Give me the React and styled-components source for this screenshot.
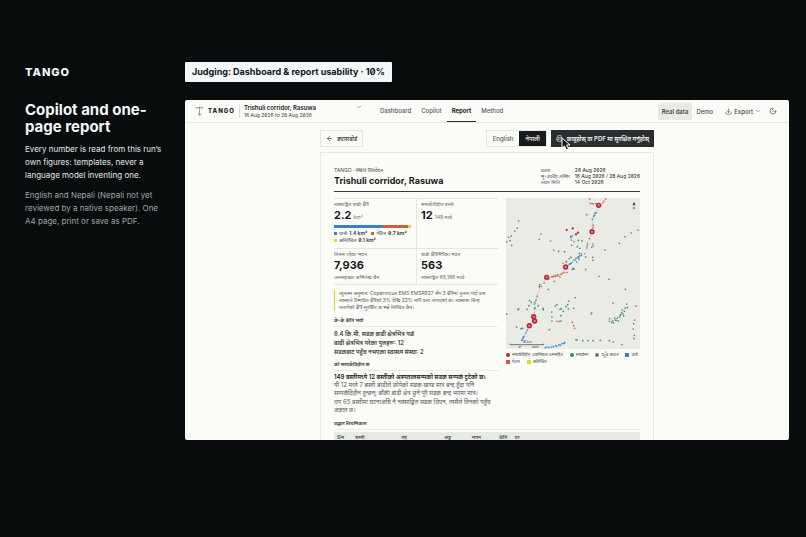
import styled, { createGlobalStyle } from 'styled-components';
import { ArrowLeft, ChevronDown, Download, Moon, Printer } from 'lucide-react';

const GlobalStyle = createGlobalStyle`
  *, *::before, *::after {
    box-sizing: border-box;
  }

  body {
    margin: 0;
    background: #080c0d;
    font-family: Inter, 'Noto Sans', 'Noto Sans Devanagari', sans-serif;
    font-feature-settings: 'zero' 1;
    color: #1c2022;
  }

  h1, h2, h3, p, ul, dl, dd {
    margin: 0;
    padding: 0;
  }

  ul {
    list-style: none;
  }

  button {
    font: inherit;
    font-feature-settings: inherit;
    color: inherit;
    background: none;
    border: 0;
    padding: 0;
    cursor: pointer;
  }
`;

const Slide = styled.div`
  display: grid;
  grid-template-columns: 142px minmax(0, 1fr);
  column-gap: 18px;
  min-height: 100vh;
  padding: 62px 17px 0 25px;
`;

const Aside = styled.aside`
  display: flex;
  flex-direction: column;
  color: #f4f7f7;
`;

const SlideBrand = styled.div`
  font-size: 11px;
  font-weight: 800;
  line-height: 21px;
  letter-spacing: 1px;
`;

const SlideTitle = styled.h1`
  margin: 18px 0 1px;
  font-size: 15px;
  font-weight: 700;
  line-height: 17px;
`;

const SlideText = styled.p`
  margin-top: 7px;
  font-size: 8px;
  line-height: 13px;
  color: ${({ $muted }) => ($muted ? '#a0a5a6' : '#e4e8e8')};
`;

const Stage = styled.main`
  display: flex;
  flex-direction: column;
  align-items: flex-start;
  gap: 18px;
`;

const Criterion = styled.div`
  padding: 0 7px;
  border-radius: 1px;
  background: #f4f8fa;
  font-size: 9px;
  font-weight: 700;
  line-height: 20px;
  color: #111516;
`;

const Screen = styled.section`
  width: 100%;
  aspect-ratio: 16 / 9;
  overflow: hidden;
  border-radius: 2px;
  background: #fbfcf7;
`;

const TopBar = styled.header`
  display: flex;
  align-items: center;
  height: 23px;
  padding: 0 10px;
  border-bottom: 1px solid #e8e9e4;
  font-size: 6px;
  color: #43484a;
`;

const Brand = styled.div`
  display: flex;
  align-items: center;
  gap: 4px;
  padding-right: 4px;
  border-right: 1px solid #dcded9;
  font-size: 6px;
  font-weight: 800;
  line-height: 14px;
  letter-spacing: 1px;
  color: #1c2022;
`;

const AreaPicker = styled.button`
  display: flex;
  align-items: flex-start;
  justify-content: space-between;
  width: 118px;
  margin-left: 4px;
  text-align: left;
  line-height: 7px;

  strong {
    display: block;
    font-weight: 600;
    color: #1c2022;
  }

  small {
    font-size: 5px;
  }
`;

const Nav = styled.nav`
  display: flex;
  align-self: stretch;
  margin-left: 13px;
`;

const NavLink = styled.a`
  display: flex;
  align-items: center;
  padding: 0 5px;
  border-bottom: 1px solid ${({ $active }) => ($active ? '#2b3032' : 'transparent')};
  font-weight: ${({ $active }) => ($active ? 700 : 500)};
  color: ${({ $active }) => ($active ? '#1c2022' : '#565b5d')};
  text-decoration: none;
`;

const Tools = styled.div`
  display: flex;
  align-items: center;
  margin-left: auto;
  padding-right: 2px;
`;

const ModeButton = styled.button`
  padding: 0 4px;
  line-height: 17px;
  font-weight: ${({ $active }) => ($active ? 600 : 500)};
  background: ${({ $active }) => ($active ? '#e9eae4' : 'transparent')};
`;

const ToolButton = styled.button`
  display: flex;
  align-items: center;
  gap: 2px;
  margin-left: 8px;
  font-weight: 500;
`;

const Content = styled.div`
  width: 90%;
  max-width: 334px;
  margin: 0 auto;
  padding-top: 7px;
`;

const ActionRow = styled.div`
  display: flex;
  align-items: center;
  margin-bottom: 5px;
  font-size: 6px;
  line-height: 15px;
`;

const BackButton = styled.button`
  display: flex;
  align-items: center;
  gap: 4px;
  margin-right: auto;
  padding: 0 5px;
  border: 1px solid #e4e6e0;
`;

const LanguageSwitch = styled.div`
  display: flex;
  border: 1px solid #e4e6e0;
`;

const LanguageButton = styled.button`
  padding: 0 6px;
  font-weight: 500;
  background: ${({ $active }) => ($active ? '#171b1d' : 'transparent')};
  color: ${({ $active }) => ($active ? '#f6f7f3' : '#565b5d')};
`;

const PrintButton = styled.button`
  position: relative;
  display: flex;
  align-items: center;
  gap: 4px;
  margin-left: 4px;
  padding: 1px 5px;
  background: #2a2e31;
  color: #f4f5f1;
  font-weight: 600;
`;

const Pointer = styled.svg`
  position: absolute;
  top: 7px;
  left: 10px;
  width: 10px;
  height: 14px;
`;

const Paper = styled.article`
  padding: 14px 13px;
  border: 1px solid #e7e9e3;
`;

const PaperHeader = styled.header`
  display: flex;
  justify-content: space-between;
  padding-bottom: 3px;
  border-bottom: 1px solid #33383a;
`;

const Eyebrow = styled.p`
  font-size: 5px;
  line-height: 7px;
  color: #43484a;
`;

const PaperTitle = styled.h2`
  font-size: 9px;
  font-weight: 700;
  line-height: 14px;
`;

const Facts = styled.dl`
  display: grid;
  grid-template-columns: 34px auto;
  grid-auto-rows: 6px;
  font-size: 5px;
  line-height: 6px;
  white-space: nowrap;

  dt {
    color: #565b5d;
  }
`;

const Columns = styled.div`
  display: grid;
  grid-template-columns: minmax(0, 164fr) minmax(0, 134fr);
  gap: 8px;
  align-items: start;
  padding-top: 6px;
`;

const Stats = styled.div`
  display: grid;
  grid-template-columns: 1fr 1fr;
  grid-template-rows: 50px 36px;
  border-bottom: 1px solid #e4e6e0;
`;

const Stat = styled.div`
  padding: 2px 0 0;
  border-top: 1px solid #e4e6e0;
  font-size: 5px;
  line-height: 7px;
  color: #64696a;

  &:nth-child(even) {
    padding-left: 4px;
    border-left: 1px solid #e4e6e0;
  }
`;

const Figure = styled.div`
  font-size: 5px;
  line-height: 14px;

  strong {
    margin-right: 2px;
    font-size: 11px;
    font-weight: 700;
    color: #15191a;
  }
`;

const SplitBar = styled.div`
  display: flex;
  height: 3px;
  margin: 1px 5px 2px 0;

  span:nth-child(1) {
    flex: 14;
    background: #3283cf;
  }

  span:nth-child(2) {
    flex: 7;
    background: #d95b3d;
  }

  span:nth-child(3) {
    flex: 1;
    background: #e8d325;
  }
`;

const Legend = styled.ul`
  display: flex;
  flex-wrap: wrap;
  column-gap: ${({ $map }) => ($map ? 7 : 4)}px;
  font-size: ${({ $map }) => ($map ? 4 : 5)}px;
  line-height: 7px;
  color: #43484a;
`;

const LegendItem = styled.li`
  display: flex;
  align-items: center;
  gap: 2px;
  white-space: nowrap;

  &::before {
    content: '';
    width: ${({ $size }) => $size || 4}px;
    height: ${({ $size }) => $size || 4}px;
    border-radius: ${({ $round }) => ($round ? '50%' : 0)};
    background: ${({ $color }) => $color};
  }
`;

const Callout = styled.p`
  margin: 5px 0;
  padding: 0 6px 0 4px;
  border-left: 1px solid #e8d325;
  font-size: 5px;
  line-height: 7px;
  color: #565b5d;
`;

const SectionTitle = styled.h3`
  margin-bottom: 2px;
  padding-bottom: 2px;
  border-bottom: 1px solid #e8eae4;
  font-size: 5px;
  font-weight: 600;
  line-height: 8px;
  color: #33383a;
`;

const DamageList = styled.ul`
  margin-bottom: 4px;
  font-size: 6px;
  font-weight: 500;
  line-height: 9px;
`;

const Body = styled.p`
  font-size: 6px;
  line-height: 8px;
  font-weight: ${({ $strong }) => ($strong ? 600 : 400)};
  color: ${({ $strong }) => ($strong ? '#1c2022' : '#565b5d')};

  &:last-of-type {
    margin: 1px 0 5px;
  }
`;

const MapSvg = styled.svg`
  display: block;
  width: 100%;
  margin-bottom: 2px;
  background: #e9ebe4;
`;

const PriorityTable = styled.table`
  width: 100%;
  border-collapse: collapse;
  font-size: 5px;
  line-height: 8px;
  color: #43484a;

  th {
    padding: 1px 3px;
    background: #e7e9e2;
    font-weight: 500;
    text-align: left;
  }
`;

const DOTS = {
  '#6f7676': [
    [38, 69], [34, 90], [26, 99], [8, 118], [16, 114], [12, 128], [2, 132], [17, 142], [100, 124], [105, 108],
    [242, 50], [259, 64], [340, 136], [357, 116], [376, 105], [396, 96], [297, 156], [197, 142], [239, 214],
    [279, 235], [309, 244], [358, 274], [260, 138], [262, 144], [257, 148], [196, 126], [220, 166], [208, 299],
    [130, 395], [386, 366], [383, 377], [382, 393], [385, 412], [384, 422], [2, 348], [176, 161], [145, 250],
    [362, 318], [349, 336], [311, 362], [310, 370], [320, 368], [343, 352], [328, 366], [390, 324], [348, 440],
  ],
  '#2f8f55': [
    [143, 156], [158, 160], [217, 127], [228, 129], [214, 146], [222, 151], [239, 177], [260, 178], [261, 187],
    [212, 192], [219, 184], [195, 178], [181, 190], [199, 214], [204, 213], [202, 211], [36, 335], [38, 333],
    [71, 308], [76, 313], [97, 323], [111, 331], [112, 335], [63, 334], [86, 331], [69, 323], [137, 342],
    [138, 357], [138, 369], [153, 320], [162, 334], [166, 332], [172, 340], [180, 326], [188, 309], [187, 333],
    [203, 331], [32, 387], [45, 392], [50, 391], [165, 369], [165, 353], [185, 320], [148, 324], [317, 373],
    [322, 375], [331, 367], [337, 369], [341, 357], [344, 350], [347, 344], [351, 348], [355, 340], [358, 330],
    [326, 360], [353, 354], [334, 360], [210, 425], [213, 426], [230, 428], [246, 428], [261, 428], [283, 427],
    [310, 428], [322, 432], [321, 315], [364, 329], [100, 266], [101, 260], [127, 274],
  ],
  '#d4603f': [
    [251, 3], [253, 16], [258, 17], [262, 18], [270, 17], [290, 15], [294, 10], [299, 3], [181, 192], [171, 196],
    [162, 237], [155, 230], [150, 234], [143, 235], [138, 236], [129, 243], [115, 255], [106, 265], [94, 295],
    [153, 370], [160, 370], [199, 373], [203, 383], [206, 391], [134, 129], [256, 348], [257, 344], [204, 131],
    [250, 122], [262, 82], [261, 89], [190, 182], [204, 186], [183, 223], [148, 232], [167, 228], [174, 224],
  ],
  '#3283cf': [
    [267, 46], [265, 52], [263, 55], [270, 44], [194, 115], [198, 114], [195, 118], [215, 178], [222, 173],
    [226, 168], [190, 199], [193, 197], [196, 196], [210, 181], [218, 176], [118, 449], [123, 447], [129, 448],
    [136, 447], [142, 446], [149, 443], [153, 445], [159, 440], [163, 442], [168, 437], [173, 436], [176, 434],
    [50, 422], [54, 415], [60, 405], [52, 418], [64, 396], [47, 427], [84, 318], [87, 312], [90, 306], [87, 330],
  ],
  '#b9253a': [[182, 96], [200, 91], [210, 109], [216, 104]],
};

const PINS = [[278, 22], [258, 101], [179, 207], [122, 238], [83, 356], [86, 369], [70, 383]];

const NAV_ITEMS = ['Dashboard', 'Copilot', 'Report', 'Method'];

const TABLE_HEADS = ['क्रम', 'बस्ती', 'तह', 'अङ्क', 'भवन', 'क्षति', 'घर'];
const TABLE_WIDTHS = ['6%', '15%', '14%', '9%', '9%', '5%', '42%'];

function LogoMark() {
  return (
    <svg width="9" height="10" viewBox="0 0 27 30" fill="none">
      <path d="M2 5h23M13.5 2v20" stroke="#6d7375" strokeWidth="2" />
      <path d="M5 5v5M22 5v5" stroke="#a7acad" strokeWidth="2" />
      <circle cx="13.5" cy="25" r="4.5" fill="#e5a6a6" />
      <circle cx="13.5" cy="25" r="2" fill="#c5545c" />
    </svg>
  );
}

function AreaMap() {
  return (
    <MapSvg viewBox="0 0 402 453" role="img">
      <path
        d="M280 27L272 44L262 60L259 80L258 101L251 122M238 166L215 180L190 200L178 212L163 230L145 236L122 239L105 262L94 290L87 325L84 356L70 383L60 402L48 426"
        fill="none"
        stroke="#8c9598"
        strokeWidth="2"
        strokeDasharray="4 5"
      />
      <path d="M172 224L158 234L135 237" fill="none" stroke="#d4603f" strokeWidth="3" strokeDasharray="5 3" />
      <path d="M237 166L188 200" fill="none" stroke="#3283cf" strokeWidth="3" strokeDasharray="3 8" />
      <path d="M245 134L242 154" stroke="#8b7d83" strokeWidth="4" strokeDasharray="2 1" />
      {Object.entries(DOTS).map(([color, points]) => (
        <g key={color} fill={color} fillOpacity="0.9">
          {points.map(([x, y]) => (
            <circle key={`${x}-${y}`} cx={x} cy={y} r={color === '#b9253a' ? 3.5 : 2.6} />
          ))}
        </g>
      ))}
      {PINS.map(([x, y]) => (
        <g key={`${x}-${y}`}>
          <circle cx={x} cy={y} r="8" fill="#b9253a" />
          <circle cx={x} cy={y} r="3" fill="#efc9cd" />
          <circle cx={x} cy={y} r="1.5" fill="#b9253a" />
        </g>
      ))}
      <path d="M384 11L389 23L384 20L379 23Z" fill="#33383a" />
      <circle cx="384" cy="30" r="2.5" fill="none" stroke="#565b5d" strokeWidth="2" />
      <path d="M12 437v3h101v-3" fill="none" stroke="#33383a" strokeWidth="2" />
      <text x="63" y="435" fontSize="10" textAnchor="middle" fill="#33383a">10 km</text>
      <text x="38" y="451" fontSize="8" fill="#33383a">0°</text>
      <text x="78" y="451" fontSize="8" fill="#33383a">10km</text>
    </MapSvg>
  );
}

function AppBar() {
  return (
    <TopBar>
      <Brand>
        <LogoMark />
        TANGO
      </Brand>
      <AreaPicker type="button">
        <span>
          <strong>Trishuli corridor, Rasuwa</strong>
          <small>16 Aug 2026 to 28 Aug 2026</small>
        </span>
        <ChevronDown size={6} />
      </AreaPicker>
      <Nav>
        {NAV_ITEMS.map((item) => (
          <NavLink key={item} href={`#${item.toLowerCase()}`} $active={item === 'Report'}>
            {item}
          </NavLink>
        ))}
      </Nav>
      <Tools>
        <ModeButton type="button" $active>Real data</ModeButton>
        <ModeButton type="button">Demo</ModeButton>
        <ToolButton type="button">
          <Download size={7} />
          Export
          <ChevronDown size={6} />
        </ToolButton>
        <ToolButton type="button" aria-label="Dark mode">
          <Moon size={8} />
        </ToolButton>
      </Tools>
    </TopBar>
  );
}

function Report() {
  return (
    <Paper>
      <PaperHeader>
        <div>
          <Eyebrow>TANGO · स्थिति प्रतिवेदन</Eyebrow>
          <PaperTitle>Trishuli corridor, Rasuwa</PaperTitle>
        </div>
        <Facts>
          <dt>घटना</dt>
          <dd>26 Aug 2026</dd>
          <dt>भू-उपग्रह तस्बिर</dt>
          <dd>16 Aug 2026 / 28 Aug 2026</dd>
          <dt>तयार मिति</dt>
          <dd>14 Oct 2026</dd>
        </Facts>
      </PaperHeader>

      <Columns>
        <div>
          <Stats>
            <Stat>
              नक्साङ्कित बाढी क्षेत्र
              <Figure><strong>2.2</strong>km²</Figure>
              <SplitBar><span /><span /><span /></SplitBar>
              <Legend>
                <LegendItem $color="#3283cf" $size={3}>पानी <b>1.4 km²</b></LegendItem>
                <LegendItem $color="#d95b3d" $size={3}>गेग्रान <b>0.7 km²</b></LegendItem>
                <LegendItem $color="#e8d325" $size={3}>अनिश्चित <b>0.1 km²</b></LegendItem>
              </Legend>
            </Stat>
            <Stat>
              सम्पर्कविहीन बस्ती
              <Figure><strong>12</strong>149 मध्ये</Figure>
            </Stat>
            <Stat>
              तिनमा रहेका भवन
              <Figure><strong>7,936</strong></Figure>
              जनसङ्ख्या अभिलेख छैन
            </Stat>
            <Stat>
              बाढी क्षेत्रभित्रका भवन
              <Figure><strong>563</strong></Figure>
              नक्साङ्कित 65,166 मध्ये
            </Stat>
          </Stats>
          <Callout>
            न्यूनतम अनुमान: Copernicus EMS EMSR927 सँग 3 क्षेत्रमा तुलना गर्दा यस नक्साले प्रभावित क्षेत्रको 3% देखि
            22% मात्र पत्ता लगाएको छ। नक्सामा चिन्ह नलागेको क्षेत्र सुरक्षित छ भन्ने निश्चित छैन।
          </Callout>
          <SectionTitle>के-के क्षति भयो</SectionTitle>
          <DamageList>
            <li>8.4 कि.मी. सडक बाढी क्षेत्रभित्र पर्छ</li>
            <li>बाढी क्षेत्रभित्र परेका पुलहरू: 12</li>
            <li>सडकबाट पहुँच नभएका स्वास्थ्य संस्था: 2</li>
          </DamageList>
          <SectionTitle>को सम्पर्कविहीन छ</SectionTitle>
          <Body $strong>149 बस्तीमध्ये 12 बस्तीको अस्पतालसम्मको सडक सम्पर्क टुटेको छ।</Body>
          <Body>
            यी 12 मध्ये 7 बस्ती बाढीले छोपेको सडक खण्ड मात्र बन्द हुँदा पनि सम्पर्कविहीन हुन्छन्; बाँकी बाढी क्षेत्र
            छुने पूरै सडक बन्द भएमा मात्र।
          </Body>
          <Body>थप 65 बस्तीमा घटनाअघि नै नक्साङ्कित सडक थिएन, त्यसैले तिनको पहुँच अज्ञात छ।</Body>
        </div>
        <div>
          <AreaMap />
          <Legend $map>
            <LegendItem $round $color="#b9253a">सम्पर्कविहीन, प्राथमिकता क्रमसहित</LegendItem>
            <LegendItem $round $color="#2f8f55">सम्पर्कमा</LegendItem>
            <LegendItem $round $color="#6f7676">पहुँच अज्ञात</LegendItem>
            <LegendItem $color="#3283cf">पानी</LegendItem>
            <LegendItem $color="#d95b3d">गेग्रान</LegendItem>
            <LegendItem $color="#e8d325">अनिश्चित</LegendItem>
          </Legend>
        </div>
      </Columns>

      <SectionTitle>उद्धार प्राथमिकता</SectionTitle>
      <PriorityTable>
        <thead>
          <tr>
            {TABLE_HEADS.map((head, i) => (
              <th key={head} width={TABLE_WIDTHS[i]}>{head}</th>
            ))}
          </tr>
        </thead>
      </PriorityTable>
    </Paper>
  );
}

function App() {
  return (
    <>
      <GlobalStyle />
      <Slide>
        <Aside>
          <SlideBrand>TANGO</SlideBrand>
          <SlideTitle>Copilot and one-page report</SlideTitle>
          <SlideText>
            Every number is read from this run’s own figures: templates, never a language model inventing one.
          </SlideText>
          <SlideText $muted>
            English and Nepali (Nepali not yet reviewed by a native speaker). One A4 page, print or save as PDF.
          </SlideText>
        </Aside>
        <Stage>
          <Criterion>Judging: Dashboard &amp; report usability · 10%</Criterion>
          <Screen>
            <AppBar />
            <Content>
              <ActionRow>
                <BackButton type="button">
                  <ArrowLeft size={7} />
                  ड्यासबोर्ड
                </BackButton>
                <LanguageSwitch>
                  <LanguageButton type="button">English</LanguageButton>
                  <LanguageButton type="button" $active>नेपाली</LanguageButton>
                </LanguageSwitch>
                <PrintButton type="button">
                  <Printer size={7} />
                  छाप्नुहोस् वा PDF मा सुरक्षित गर्नुहोस्
                  <Pointer viewBox="0 0 20 28">
                    <path
                      d="M2 2v20l5-4 4 8 4-2-4-8h7z"
                      fill="#111416"
                      stroke="#fff"
                      strokeWidth="2"
                      strokeLinejoin="round"
                    />
                  </Pointer>
                </PrintButton>
              </ActionRow>
              <Report />
            </Content>
          </Screen>
        </Stage>
      </Slide>
    </>
  );
}

export default App;
